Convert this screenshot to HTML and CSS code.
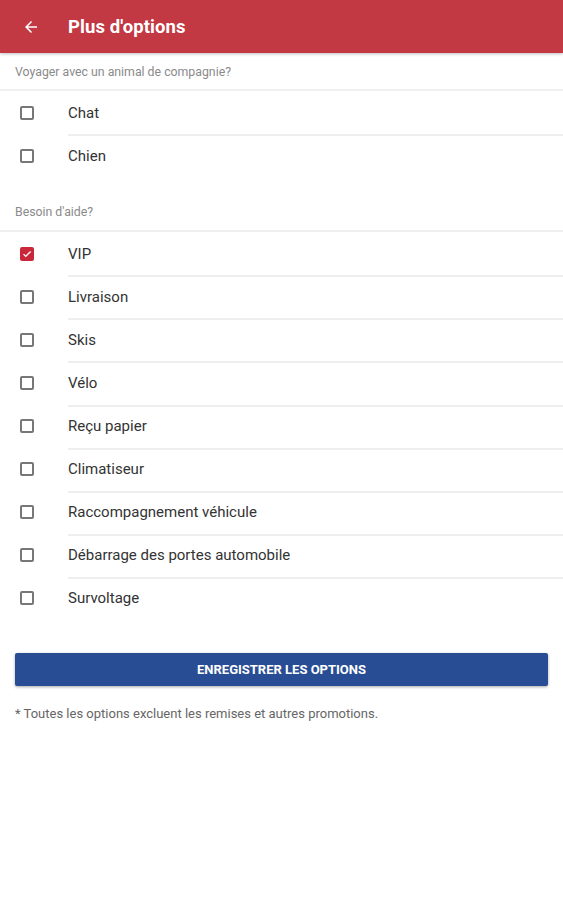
FILE: index.html
```html
<!DOCTYPE html>
<html lang="fr">
<head>
<meta charset="utf-8">
<link rel="stylesheet" href="styles.css">
</head>
<body>
<header class="appbar">
  <svg class="back" width="18" height="18" viewBox="0 0 24 24"><path d="M20 11H7.83l5.59-5.59L12 4l-8 8 8 8 1.41-1.41L7.83 13H20v-2z" fill="#fff"/></svg>
  <h1 class="title">Plus d'options</h1>
</header>
<section class="group">
  <div class="group-head">Voyager avec un animal de compagnie?</div>
  <ul class="list">
    <li class="row"><span class="box"></span><span class="label">Chat</span></li>
    <li class="row"><span class="box"></span><span class="label">Chien</span></li>
  </ul>
</section>
<section class="group">
  <div class="group-head">Besoin d'aide?</div>
  <ul class="list">
    <li class="row"><span class="box checked"><svg width="10" height="10" viewBox="0 0 24 24"><path d="M9 16.2L4.8 12l-1.4 1.4L9 19 21 7l-1.4-1.4L9 16.2z" fill="#fff" stroke="#fff" stroke-width="1.5"/></svg></span><span class="label">VIP</span></li>
    <li class="row"><span class="box"></span><span class="label">Livraison</span></li>
    <li class="row"><span class="box"></span><span class="label">Skis</span></li>
    <li class="row"><span class="box"></span><span class="label">Vélo</span></li>
    <li class="row"><span class="box"></span><span class="label">Reçu papier</span></li>
    <li class="row"><span class="box"></span><span class="label">Climatiseur</span></li>
    <li class="row"><span class="box"></span><span class="label">Raccompagnement véhicule</span></li>
    <li class="row"><span class="box"></span><span class="label">Débarrage des portes automobile</span></li>
    <li class="row"><span class="box"></span><span class="label">Survoltage</span></li>
  </ul>
</section>
<div class="actions">
  <button class="save">ENREGISTRER LES OPTIONS</button>
  <p class="note">* Toutes les options excluent les remises et autres promotions.</p>
</div>
</body>
</html>
```
FILE: styles.css
```css
* { box-sizing: border-box; }
html, body { margin: 0; padding: 0; background: #fff; }
body { font-family: Roboto, "Noto Sans", "Liberation Sans", sans-serif; width: 563px; }
.appbar {
  height: 53px;
  background: #c23843;
  display: flex;
  align-items: center;
  padding-left: 22px;
  box-shadow: 0 1px 3px rgba(0,0,0,0.25);
  position: relative;
}
.back { display: block; }
.title {
  margin: 0 0 0 28px;
  color: #fff;
  font-size: 18.5px;
  font-weight: 700;
  letter-spacing: 0.1px;
}
.group-head {
  height: 38px;
  display: flex;
  align-items: center;
  padding-left: 15px;
  padding-top: 1px;
  font-size: 12.3px;
  color: #8a8a8a;
  border-bottom: 2px solid #f0f0f0;
}
.group + .group .group-head { height: 41px; padding-top: 3px; }
.list { list-style: none; margin: 0; padding: 0 0 14px 0; }
.row {
  height: 43.1px;
  display: flex;
  align-items: center;
  position: relative;
}
.row + .row::before {
  content: "";
  position: absolute;
  left: 68px;
  right: 0;
  top: 0;
  border-top: 2px solid #eeeeee;
}
.box {
  width: 14px;
  height: 14px;
  margin-left: 20px;
  border: 2px solid #777;
  border-radius: 2px;
  display: flex;
  align-items: center;
  justify-content: center;
}
.box.checked { background: #c8283a; border-color: #c8283a; }
.label {
  margin-left: 34px;
  font-size: 15px;
  color: #333;
}
.actions { padding: 19px 15px 0 15px; }
.save {
  display: block;
  width: 533px;
  height: 33px;
  border: none;
  border-radius: 2px;
  background: #284d95;
  color: #fff;
  font-family: Roboto, "Noto Sans", "Liberation Sans", sans-serif;
  font-weight: 700;
  font-size: 13px;
  box-shadow: 0 1px 3px rgba(0,0,0,0.35);
}
.note {
  margin: 20px 0 0 0;
  font-size: 13px;
  color: #666;
}
```
